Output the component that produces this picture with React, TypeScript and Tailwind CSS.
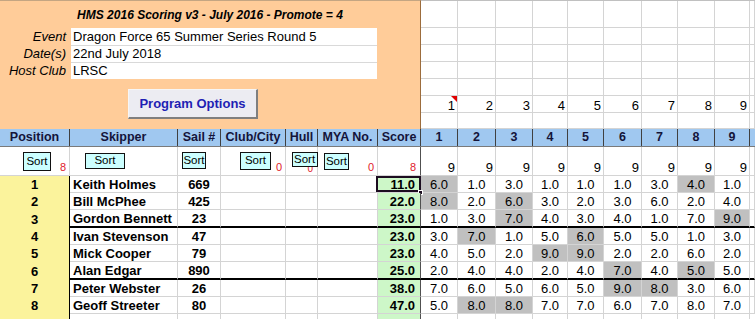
import React from "react";

const COLS = ["w-[70px]", "w-[108px]", "w-[43px]", "w-[65px]", "w-[32px]", "w-[60px]", "w-[43px]"];
const RACE = ["w-[37px]", "w-[38px]", "w-[37px]", "w-[35px]", "w-[36px]", "w-[38px]", "w-[36px]", "w-[37px]", "w-[35px]"];

const TOP_ROWS = [
    "h-[28px] border-t border-t-[#c0c0c0]",
    "h-[17px]",
    "h-[17px]",
    "h-[17px]",
    "h-[17px]",
    "h-[17px]",
    "h-[16px]",
];

const info = [
    ["Event", "Dragon Force 65 Summer Series Round 5"],
    ["Date(s)", "22nd July 2018"],
    ["Host Club", "LRSC"],
];

const headers = ["Position", "Skipper", "Sail #", "Club/City", "Hull", "MYA No.", "Score"];

const results = [
    { pos: 1, name: "Keith Holmes", sail: "669", score: "11.0", r: ["6.0", "1.0", "3.0", "1.0", "1.0", "1.0", "3.0", "4.0", "1.0"], drop: [0, 7] },
    { pos: 2, name: "Bill McPhee", sail: "425", score: "22.0", r: ["8.0", "2.0", "6.0", "3.0", "2.0", "3.0", "6.0", "2.0", "4.0"], drop: [0, 2] },
    { pos: 3, name: "Gordon Bennett", sail: "23", score: "23.0", r: ["1.0", "3.0", "7.0", "4.0", "3.0", "4.0", "1.0", "7.0", "9.0"], drop: [2, 8] },
    { pos: 4, name: "Ivan Stevenson", sail: "47", score: "23.0", r: ["3.0", "7.0", "1.0", "5.0", "6.0", "5.0", "5.0", "1.0", "3.0"], drop: [1, 4] },
    { pos: 5, name: "Mick Cooper", sail: "79", score: "23.0", r: ["4.0", "5.0", "2.0", "9.0", "9.0", "2.0", "2.0", "6.0", "2.0"], drop: [3, 4] },
    { pos: 6, name: "Alan Edgar", sail: "890", score: "25.0", r: ["2.0", "4.0", "4.0", "2.0", "4.0", "7.0", "4.0", "5.0", "5.0"], drop: [5, 7] },
    { pos: 7, name: "Peter Webster", sail: "26", score: "38.0", r: ["7.0", "6.0", "5.0", "6.0", "5.0", "9.0", "8.0", "3.0", "6.0"], drop: [5, 6] },
    { pos: 8, name: "Geoff Streeter", sail: "80", score: "47.0", r: ["5.0", "8.0", "8.0", "7.0", "7.0", "6.0", "7.0", "8.0", "7.0"], drop: [1, 2] },
];

const grid = "border-r border-r-[#d4d4d4] border-b border-b-[#d4d4d4]";
const sortBtn = "absolute bg-[#ccffff] border border-[#111] text-black text-[11.5px] leading-none flex items-center justify-center";

export default function App() {
    return (
        <div className="w-[755px] h-[319px] overflow-hidden bg-white text-black font-['Liberation_Sans',Arial,sans-serif]">

            {/* top block */}
            <div className="flex">
                <div className="w-[421px] h-[129px] shrink-0 flex flex-col bg-[#ffcc99] border-t border-t-[#c4a582] border-r border-r-[#9c6c3c]">
                    <div className="h-[27px] flex items-center justify-center text-[12px] font-bold italic">
                        HMS 2016 Scoring v3 - July 2016 - Promote = 4
                    </div>
                    {info.map(([label, value], i) => (
                        <div key={label} className="h-[17px] flex">
                            <div className="w-[70px] flex items-center justify-end pr-[4px] text-[13px] italic">{label}</div>
                            <div className={`w-[306px] ml-[1px] bg-white flex items-center pl-[2px] text-[13px] ${i > 0 ? "border-t border-t-[#d9d9d9]" : ""}`}>
                                {value}
                            </div>
                        </div>
                    ))}
                    <div className="flex-1 flex items-center pl-[128px]">
                        <button className="w-[130px] h-[30px] bg-[#ececf2] border border-t-[#f6f6f6] border-l-[#f6f6f6] border-r-2 border-b-2 border-r-[#7f7f7f] border-b-[#7f7f7f] text-[13px] font-bold text-[#1f1fb4]">
                            Program Options
                        </button>
                    </div>
                </div>
                <div className="flex-1 flex flex-col">
                    {TOP_ROWS.map((h, ri) => (
                        <div key={ri} className={`flex ${h}`}>
                            {RACE.map((w, ci) => (
                                <div key={ci} className={`${w} shrink-0 h-full relative flex items-end justify-end pr-[2px] text-[13px] leading-[12px] ${grid}`}>
                                    {ri === 5 ? ci + 1 : ""}
                                    {ri === 5 && ci === 0 && (
                                        <svg className="absolute top-0 right-0" width="6" height="6" viewBox="0 0 6 6">
                                            <polygon points="0,0 6,0 6,6" fill="#e00000" />
                                        </svg>
                                    )}
                                </div>
                            ))}
                            <div className={`flex-1 h-full ${grid}`} />
                        </div>
                    ))}
                </div>
            </div>

            {/* header row */}
            <div className="flex h-[18px] bg-[#a0c8f0] text-[12.5px] font-bold text-[#14143a] border-b border-b-[#7a7a7a]">
                {headers.map((h, i) => (
                    <div key={h} className={`${COLS[i]} shrink-0 flex items-center justify-center border-r border-r-[#404040]`}>{h}</div>
                ))}
                {RACE.map((w, i) => (
                    <div key={i} className={`${w} shrink-0 flex items-center justify-center border-r border-r-[#404040]`}>{i + 1}</div>
                ))}
                <div className="flex-1" />
            </div>

            {/* sort row */}
            <div className="flex h-[29px] text-[11px] text-[#e0202a]">
                <div className={`relative w-[70px] shrink-0 flex items-end justify-end pr-[3px] pb-[2px] leading-none ${grid}`}>
                    8
                    <span className={`${sortBtn} left-[23px] top-[5px] w-[28px] h-[19px]`}>Sort</span>
                </div>
                <div className={`relative w-[108px] shrink-0 ${grid}`}>
                    <span className={`${sortBtn} left-[15px] top-[6px] w-[40px] h-[16px]`}>Sort</span>
                </div>
                <div className={`relative w-[43px] shrink-0 ${grid}`}>
                    <span className={`${sortBtn} left-[4px] top-[5px] w-[24px] h-[17px]`}>Sort</span>
                </div>
                <div className={`relative w-[65px] shrink-0 flex items-end justify-end pr-[3px] pb-[2px] leading-none ${grid}`}>
                    0
                    <span className={`${sortBtn} left-[19px] top-[5px] w-[31px] h-[18px]`}>Sort</span>
                </div>
                <div className={`relative w-[32px] shrink-0 flex items-end justify-end pr-[4px] pb-[1px] leading-none text-[10px] ${grid}`}>
                    0
                    <span className={`${sortBtn} left-[6px] top-[5px] w-[26px] h-[15px] !justify-start pl-[1px] overflow-hidden whitespace-nowrap`}>Sort</span>
                </div>
                <div className={`relative w-[60px] shrink-0 flex items-end justify-end pr-[3px] pb-[2px] leading-none ${grid}`}>
                    0
                    <span className={`${sortBtn} left-[6px] top-[6px] w-[25px] h-[17px]`}>Sort</span>
                </div>
                <div className="w-[43px] shrink-0 flex items-end justify-end pr-[4px] pb-[2px] leading-none border-b border-b-[#d4d4d4] border-r border-r-[#505050]">
                    8
                </div>
                {RACE.map((w, i) => (
                    <div key={i} className={`${w} shrink-0 flex items-end justify-end pr-[2px] pb-[1px] text-[13px] leading-[12px] text-black ${grid}`}>9</div>
                ))}
                <div className={`flex-1 ${grid}`} />
            </div>

            {/* results */}
            {results.map((row, ri) => {
                const thick = ri === 2 || ri === 5;
                const h = thick ? "h-[18px]" : "h-[17px]";
                const bb = thick ? "border-b-2 border-b-black" : "border-b border-b-[#d4d4d4]";
                const br = "border-r border-r-[#d4d4d4]";
                return (
                    <div key={row.pos} className={`flex ${h} text-[13px] leading-none`}>
                        <div className="w-[70px] shrink-0 bg-[#fbf39c] border-r border-r-black flex items-center justify-center font-bold">
                            {row.pos}
                        </div>
                        <div className={`w-[108px] shrink-0 flex items-center pl-[3px] font-bold whitespace-nowrap ${br} ${bb}`}>{row.name}</div>
                        <div className={`w-[43px] shrink-0 flex items-center justify-center font-bold ${br} ${bb}`}>{row.sail}</div>
                        <div className={`w-[65px] shrink-0 ${br} ${bb}`} />
                        <div className={`w-[32px] shrink-0 ${br} ${bb}`} />
                        <div className={`w-[60px] shrink-0 ${br} ${bb}`} />
                        <div className={`relative w-[43px] shrink-0 bg-[#cdf7c8] flex items-center justify-end pr-[5px] font-bold border-r border-r-[#505050] ${bb}`}>
                            {row.score}
                            {ri === 0 && (
                                <>
                                    <span className="absolute -left-[2px] -right-[1px] top-0 bottom-0 border-2 border-[#1c0c20]" />
                                    <span className="absolute -right-[3px] -bottom-[3px] w-[5px] h-[5px] bg-[#1c0c20] border border-white" />
                                </>
                            )}
                        </div>
                        {row.r.map((v, ci) => (
                            <div
                                key={ci}
                                className={`${RACE[ci]} shrink-0 flex items-center justify-center ${row.drop.includes(ci) ? "bg-[#c0c0c0]" : ""} ${br} ${bb}`}
                            >
                                {v}
                            </div>
                        ))}
                        <div className={`flex-1 ${br} ${bb}`} />
                    </div>
                );
            })}

            {/* next empty row */}
            <div className="flex h-[10px]">
                <div className="w-[70px] shrink-0 bg-[#fbf39c] border-r border-r-black" />
                {COLS.slice(1, 6).map((w, i) => (
                    <div key={i} className={`${w} shrink-0 border-r border-r-[#d4d4d4]`} />
                ))}
                <div className="w-[43px] shrink-0 bg-[#cdf7c8] border-r border-r-[#505050]" />
                {RACE.map((w, i) => (
                    <div key={i} className={`${w} shrink-0 border-r border-r-[#d4d4d4]`} />
                ))}
                <div className="flex-1" />
            </div>
        </div>
    );
}
